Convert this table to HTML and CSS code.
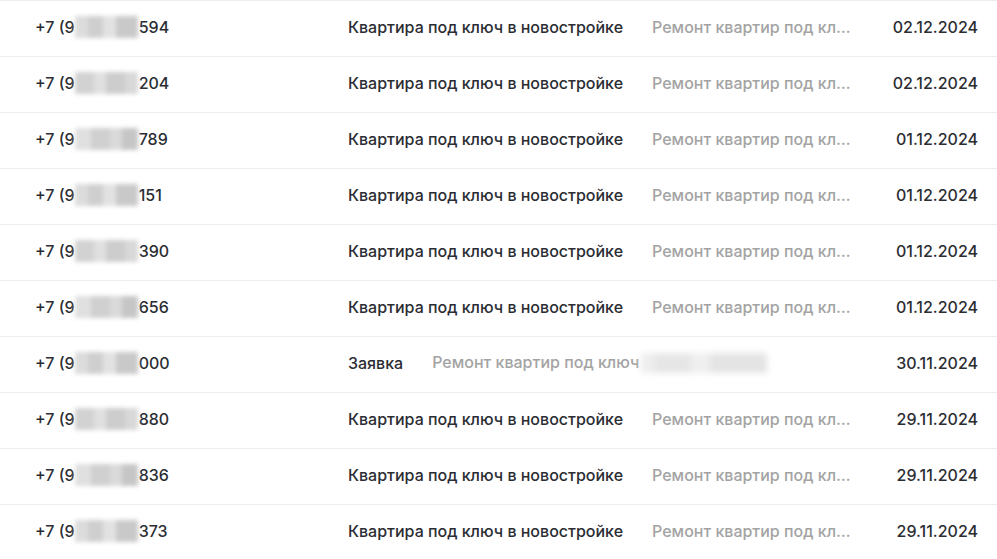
FILE: index.html
```html
<!DOCTYPE html>
<html lang="ru">
<head>
<meta charset="utf-8">
<link rel="stylesheet" href="styles.css">
</head>
<body>
<div class="list">
  <div class="row"><div class="phone">+7 (9<span class="blur b1"></span>594</div><div class="mid"><span class="title">Квартира под ключ в новостройке</span><span class="desc">Ремонт квартир под ключ в новостройке</span></div><div class="date">02.12.2024</div></div>
  <div class="row"><div class="phone">+7 (9<span class="blur b2"></span>204</div><div class="mid"><span class="title">Квартира под ключ в новостройке</span><span class="desc">Ремонт квартир под ключ в новостройке</span></div><div class="date">02.12.2024</div></div>
  <div class="row"><div class="phone">+7 (9<span class="blur b3"></span>789</div><div class="mid"><span class="title">Квартира под ключ в новостройке</span><span class="desc">Ремонт квартир под ключ в новостройке</span></div><div class="date">01.12.2024</div></div>
  <div class="row"><div class="phone">+7 (9<span class="blur b1"></span>151</div><div class="mid"><span class="title">Квартира под ключ в новостройке</span><span class="desc">Ремонт квартир под ключ в новостройке</span></div><div class="date">01.12.2024</div></div>
  <div class="row"><div class="phone">+7 (9<span class="blur b2"></span>390</div><div class="mid"><span class="title">Квартира под ключ в новостройке</span><span class="desc">Ремонт квартир под ключ в новостройке</span></div><div class="date">01.12.2024</div></div>
  <div class="row"><div class="phone">+7 (9<span class="blur b3"></span>656</div><div class="mid"><span class="title">Квартира под ключ в новостройке</span><span class="desc">Ремонт квартир под ключ в новостройке</span></div><div class="date">01.12.2024</div></div>
  <div class="row"><div class="phone">+7 (9<span class="blur b1"></span>000</div><div class="mid"><span class="title">Заявка</span><span class="desc full">Ремонт квартир под ключ<span class="blur wide"></span></span></div><div class="date">30.11.2024</div></div>
  <div class="row"><div class="phone">+7 (9<span class="blur b2"></span>880</div><div class="mid"><span class="title">Квартира под ключ в новостройке</span><span class="desc">Ремонт квартир под ключ в новостройке</span></div><div class="date">29.11.2024</div></div>
  <div class="row"><div class="phone">+7 (9<span class="blur b3"></span>836</div><div class="mid"><span class="title">Квартира под ключ в новостройке</span><span class="desc">Ремонт квартир под ключ в новостройке</span></div><div class="date">29.11.2024</div></div>
  <div class="row"><div class="phone">+7 (9<span class="blur b1"></span>373</div><div class="mid"><span class="title">Квартира под ключ в новостройке</span><span class="desc">Ремонт квартир под ключ в новостройке</span></div><div class="date">29.11.2024</div></div>
</div>
</body>
</html>
```
FILE: styles.css
```css
html, body {
  margin: 0;
  padding: 0;
  background: #ffffff;
}
body {
  font-family: Inter, "Noto Sans", sans-serif;
  font-size: 16px;
  font-weight: 500;
  color: #2b2d33;
}
.list {
  display: flex;
  flex-direction: column;
}
.row {
  display: flex;
  align-items: center;
  height: 55px;
  box-sizing: content-box;
  border-top: 1px solid #ededed;
  padding: 0 19px 0 35px;
}
.row > div {
  margin-bottom: 4px;
}
.phone {
  width: 313px;
  flex: none;
  display: flex;
  align-items: center;
  white-space: nowrap;
}
.mid {
  flex: none;
  width: 520px;
  display: flex;
  align-items: center;
  gap: 29px;
  white-space: nowrap;
}
.title {
  flex: none;
}
.desc {
  display: block;
  color: #a3a3a3;
  overflow: hidden;
  text-overflow: ellipsis;
  min-width: 0;
  width: 200px;
  flex: none;
}
.desc.full {
  width: auto;
  overflow: visible;
}
.date {
  margin-left: auto;
  flex: none;
  text-align: right;
}
.blur {
  display: inline-block;
  vertical-align: middle;
  width: 63px;
  height: 22px;
  background: #d6d6d6;
  filter: blur(2px);
  margin: 0 1px 0 0;
}
.b1 {
  background: linear-gradient(90deg, #dcdcdc 0 20%, #cfcfcf 20% 45%, #e2e2e2 45% 65%, #c9c9c9 65% 100%);
}
.b2 {
  background: linear-gradient(90deg, #d2d2d2 0 30%, #e0e0e0 30% 50%, #cdcdcd 50% 80%, #d8d8d8 80% 100%);
}
.b3 {
  background: linear-gradient(90deg, #e0e0e0 0 25%, #d0d0d0 25% 55%, #dadada 55% 75%, #c6c6c6 75% 100%);
}
.wide {
  width: 126px;
  height: 20px;
  margin-left: 2px;
  background: linear-gradient(90deg, #eeeeee 0 10%, #e6e6e6 10% 40%, #efefef 40% 55%, #e4e4e4 55% 100%);
  filter: blur(3px);
}
```
